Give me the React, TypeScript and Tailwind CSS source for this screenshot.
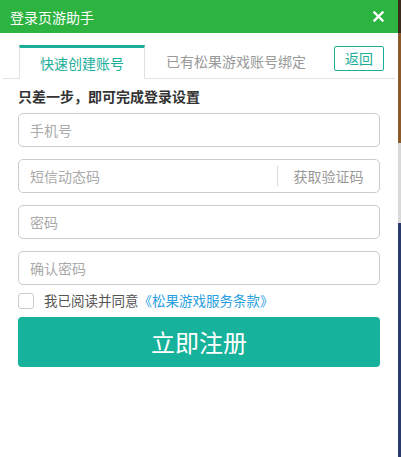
import React from "react";

export default function App() {
  const font = { fontFamily: '"Microsoft YaHei", "Noto Sans CJK SC", "Noto Sans", sans-serif' };
  return (
    <div className="flex w-[401px] h-[457px] overflow-hidden" style={font}>
      <div className="w-[398px] h-full bg-white flex flex-col">
        <div className="h-[33px] bg-[#2db33f] flex items-center justify-between pl-[10px] pr-[14px]">
          <span className="text-white text-[14px] leading-none">登录页游助手</span>
          <svg width="11" height="11" viewBox="0 0 11 11">
            <path d="M1.5 1.5 L9.5 9.5 M9.5 1.5 L1.5 9.5" stroke="white" strokeWidth="2.4" strokeLinecap="square" />
          </svg>
        </div>
        <div className="mt-[12px] mx-[3px] h-[34px] border-b border-[#e3e3e3] flex items-end">
          <div className="ml-[16px] w-[126px] h-[34px] border-t-[3px] border-t-[#1bae98] border-x border-x-[#e0e0e0] bg-white -mb-px flex items-center justify-center text-[14px] text-[#1bae98]">
            快速创建账号
          </div>
          <div className="ml-[21px] h-[33px] flex items-center text-[14px] text-[#999]">已有松果游戏账号绑定</div>
          <div className="ml-auto mr-[11px] mb-[7px] w-[50px] h-[25px] border border-[#1bae98] rounded-[2px] flex items-center justify-center text-[14px] text-[#1bae98]">
            返回
          </div>
        </div>
        <div className="px-[18px]">
          <div className="mt-[8px] text-[14px] font-bold text-[#333] leading-[18px]">只差一步，即可完成登录设置</div>
          <div className="mt-[8px] flex flex-col gap-[12px]">
            <div className="h-[34px] border border-[#cccccc] rounded-[5px] flex items-center pl-[11px] text-[14px] text-[#aaa]">手机号</div>
            <div className="h-[34px] border border-[#cccccc] rounded-[5px] flex items-center pl-[11px] text-[14px] text-[#aaa]">
              <span className="flex-1">短信动态码</span>
              <span className="w-px h-[20px] bg-[#d8d8d8]"></span>
              <span className="w-[101px] text-center text-[#999]">获取验证码</span>
            </div>
            <div className="h-[34px] border border-[#cccccc] rounded-[5px] flex items-center pl-[11px] text-[14px] text-[#aaa]">密码</div>
            <div className="h-[34px] border border-[#cccccc] rounded-[5px] flex items-center pl-[11px] text-[14px] text-[#aaa]">确认密码</div>
          </div>
          <div className="mt-[7px] flex items-center h-[17px]">
            <span className="w-[16px] h-[16px] border border-[#ccc] rounded-[3px] bg-white"></span>
            <span className="ml-[10px] text-[13.5px] text-[#555]">我已阅读并同意</span>
            <span className="text-[13.5px] text-[#2a9fe0]">《松果游戏服务条款》</span>
          </div>
          <div className="mt-[8px] h-[50px] bg-[#17b29b] rounded-[4px] flex items-center justify-center text-white text-[24px]">
            立即注册
          </div>
        </div>
      </div>
      <div className="flex-1 h-full flex flex-col">
        <div className="h-[33px] bg-[#3a2a1c]"></div>
        <div className="h-[110px] bg-[#8a5a2a]"></div>
        <div className="h-[80px] bg-[#d8d8d8]"></div>
        <div className="flex-1 bg-[#2a3a6a]"></div>
      </div>
    </div>
  );
}
